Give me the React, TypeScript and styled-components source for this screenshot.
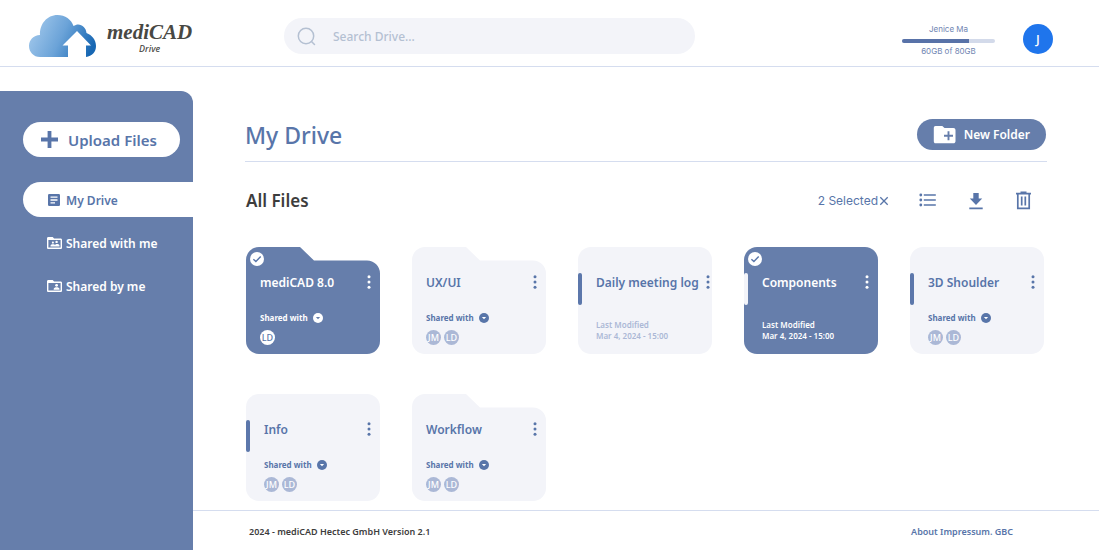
import React from 'react';
import styled, { createGlobalStyle, css } from 'styled-components';

const color = {
  blue: '#667eab',
  text: '#5875a9',
  card: '#f3f4f9',
  soft: '#abb8d6',
  line: '#d5ddef',
  dark: '#3d3d3d',
};

const GlobalStyle = createGlobalStyle`
  *, *::before, *::after { box-sizing: border-box; }
  body { margin: 0; background: #fff; font-family: 'Noto Sans', sans-serif; color: ${color.text}; }
  button, input { font: inherit; color: inherit; }
  button { border: 0; padding: 0; background: none; cursor: pointer; }
  a { color: inherit; text-decoration: none; }
  h1, h2, h3, p, ul { margin: 0; padding: 0; }
  ul { list-style: none; }
  svg { display: block; flex: none; }
`;

const Page = styled.div`
  display: flex;
  flex-direction: column;
  min-height: 100vh;
`;

const Header = styled.header`
  display: flex;
  align-items: flex-start;
  height: 67px;
  padding: 0 46px 0 28px;
  border-bottom: 1px solid ${color.line};
`;

const Brand = styled.a`
  display: flex;
  flex: none;
  gap: 10px;
  width: 256px;
  padding-top: 14px;
  color: #484843;
`;

const BrandText = styled.span`
  display: flex;
  flex-direction: column;
  align-items: center;
  padding-top: 6px;
`;

const BrandName = styled.span`
  font: italic 700 21px/24px 'Liberation Serif', serif;
`;

const BrandSub = styled.span`
  font-size: 9px;
  font-style: italic;
  font-weight: 500;
  line-height: 10px;
`;

const Search = styled.label`
  display: flex;
  align-items: center;
  flex: 0 1 411px;
  gap: 17px;
  height: 36px;
  margin-top: 18px;
  padding: 0 13px;
  border-radius: 18px;
  background: ${color.card};
  color: #b4c0d2;
`;

const SearchInput = styled.input`
  flex: 1;
  min-width: 0;
  padding: 0;
  border: 0;
  outline: 0;
  background: none;
  font-size: 12px;
  font-weight: 500;
  &::placeholder { color: #b4c0d2; opacity: 1; }
`;

const Account = styled.div`
  display: flex;
  gap: 28px;
  margin-left: auto;
  padding-top: 24px;
`;

const Quota = styled.div`
  width: 93px;
  font: 400 8px/11px Inter, sans-serif;
  text-align: center;
  color: #7085b2;
`;

const QuotaBar = styled.progress`
  display: block;
  width: 100%;
  height: 4px;
  margin: 4px 0 3px;
  appearance: none;
  border: 0;
  &::-webkit-progress-bar { border-radius: 2px; background: #d3daea; overflow: hidden; }
  &::-webkit-progress-value { background: #5872a8; }
`;

const Avatar = styled.button`
  width: 30px;
  height: 30px;
  border-radius: 50%;
  background: #1f75ec;
  color: #fff;
  font-size: 13px;
  font-weight: 500;
  line-height: 30px;
`;

const Body = styled.div`
  display: flex;
  flex: 1;
`;

const Sidebar = styled.aside`
  flex: none;
  width: 193px;
  margin-top: 24px;
  padding: 31px 0 0 23px;
  border-radius: 0 12px 0 0;
  background: ${color.blue};
`;

const Upload = styled.button`
  display: flex;
  align-items: center;
  gap: 10px;
  width: 157px;
  height: 35px;
  margin-bottom: 25px;
  padding-left: 18px;
  border-radius: 18px;
  background: #fff;
  font-size: 15px;
  font-weight: 600;
`;

const NavList = styled.ul`
  display: grid;
  gap: 8px;
`;

const NavLink = styled.a<{ $active?: boolean }>`
  display: flex;
  align-items: center;
  gap: 4px;
  height: 35px;
  padding: 1px 0 0 24px;
  border-radius: 18px 0 0 18px;
  font-size: 12px;
  font-weight: 600;
  color: ${p => (p.$active ? color.text : '#fff')};
  background: ${p => (p.$active ? '#fff' : 'none')};
`;

const Column = styled.div`
  display: flex;
  flex: 1;
  flex-direction: column;
  min-width: 0;
`;

const Main = styled.main`
  flex: 1;
  padding: 52px 52px 9px;
`;

const TitleBar = styled.div`
  display: flex;
  align-items: flex-start;
  justify-content: space-between;
  height: 43px;
  padding-right: 1px;
  border-bottom: 1px solid ${color.line};
`;

const Title = styled.h1`
  font-size: 23px;
  font-weight: 500;
  line-height: 32px;
`;

const NewFolder = styled.button`
  display: flex;
  align-items: center;
  gap: 8px;
  height: 31px;
  padding: 0 16px;
  border-radius: 16px;
  background: ${color.blue};
  color: #fff;
  font-size: 12px;
  font-weight: 600;
`;

const Toolbar = styled.div`
  display: flex;
  align-items: center;
  justify-content: space-between;
  height: 30px;
  margin: 24px 0 31px;
  padding: 0 15px 0 1px;
`;

const Subtitle = styled.h2`
  font-size: 17px;
  font-weight: 600;
  line-height: 32px;
  color: ${color.dark};
`;

const Actions = styled.div`
  display: flex;
  align-items: center;
  gap: 30px;
`;

const Selected = styled.button`
  display: flex;
  align-items: center;
  gap: 1px;
  font: 400 12px/16px Inter, sans-serif;
`;

const Grid = styled.ul`
  display: grid;
  grid-template-columns: repeat(auto-fill, 134px);
  gap: 40px 32px;
  padding-left: 1px;
`;

const Card = styled.li<{ $folder?: boolean; $selected?: boolean }>`
  position: relative;
  height: 107px;
  padding: 25px 9px 0 ${p => (p.$folder ? 14 : 18)}px;
  color: ${p => (p.$selected ? '#fff' : color.text)};
  ${p =>
    !p.$folder &&
    css`
      border-radius: 13px;
      background: ${p.$selected ? color.blue : color.card};
      &::before {
        content: '';
        position: absolute;
        top: 26px;
        left: 0;
        width: 4px;
        height: 32px;
        border-radius: 2px;
        background: ${p.$selected ? color.card : '#5c77ab'};
      }
    `}
`;

const FolderShape = styled.svg`
  position: absolute;
  inset: 0;
  z-index: -1;
`;

const Check = styled.label`
  position: absolute;
  top: 5px;
  left: 4px;
  input { position: absolute; inset: 0; margin: 0; opacity: 0; }
`;

const CardHead = styled.div`
  display: flex;
  align-items: center;
  justify-content: space-between;
  gap: 7px;
  height: 20px;
`;

const CardTitle = styled.h3`
  flex: none;
  font-size: 12px;
  font-weight: 600;
  white-space: nowrap;
`;

const SharedButton = styled.button`
  display: flex;
  align-items: center;
  gap: 5px;
  height: 12px;
  margin-top: 20px;
  font-size: 8px;
  font-weight: 700;
  line-height: 12px;
`;

const People = styled.div`
  display: flex;
  gap: 3px;
  margin-top: 6px;
`;

const Person = styled.span<{ $selected?: boolean }>`
  width: 15px;
  height: 15px;
  border-radius: 50%;
  background: ${p => (p.$selected ? '#fff' : color.soft)};
  color: ${p => (p.$selected ? color.text : '#fff')};
  font-size: 9px;
  font-weight: 500;
  line-height: 16px;
  text-align: center;
`;

const Modified = styled.p<{ $selected?: boolean }>`
  margin-top: 27px;
  font-size: 8px;
  font-weight: 600;
  line-height: 11px;
  color: ${p => (p.$selected ? '#fff' : color.soft)};
`;

const Footer = styled.footer`
  display: flex;
  justify-content: space-between;
  height: 40px;
  padding: 0 86px 0 56px;
  border-top: 1px solid ${color.line};
  font-size: 9px;
  font-weight: 600;
  line-height: 41px;
  color: ${color.dark};
`;

const FooterLinks = styled.nav`
  color: ${color.text};
`;

const CloudLogo = () => (
  <svg width="69" height="44" viewBox="0 0 69 44" aria-hidden="true">
    <defs>
      <linearGradient id="cloud" x1="0" y1="0.3" x2="1" y2="0.6">
        <stop offset="0" stopColor="#a3c9ec" />
        <stop offset="0.5" stopColor="#6ba3d8" />
        <stop offset="1" stopColor="#1767b3" />
      </linearGradient>
    </defs>
    <path
      fill="url(#cloud)"
      d="M12 43C5.500 43 1 38 1 32C1 26 5.500 21.300 12 21C11.500 10 19 1 29.500 1C37 1 43.500 5.500 45.500 12C51 8 58 12 58.500 19C64 21 68 26 68 32C68 38 64 42.300 58 43V31.500H63L49 17L34.500 31.500H40V43Z"
    />
  </svg>
);

const SearchIcon = () => (
  <svg width="19" height="19" viewBox="0 0 19 19" fill="none" stroke="currentColor" strokeWidth="1.500" strokeLinecap="round">
    <circle cx="9" cy="9" r="7.700" />
    <path d="M14.500 14.500L17.500 17.500" />
  </svg>
);

const PlusIcon = () => (
  <svg width="17" height="17" viewBox="0 0 17 17" fill="currentColor">
    <path d="M6.600 0h3.800v6.600H17v3.800h-6.600V17H6.600v-6.600H0V6.600h6.600z" />
  </svg>
);

const ArticleIcon = () => (
  <svg width="15" height="14" viewBox="0 0 15 14">
    <rect x="1" y="1" width="12" height="12" rx="1.200" fill="currentColor" />
    <path d="M3.500 4.200h7M3.500 7h7M3.500 9.800h4.500" stroke="#fff" strokeWidth="1.300" />
  </svg>
);

const FolderOutline = ({ children }: { children: React.ReactNode }) => (
  <svg width="15" height="14" viewBox="0 0 15 14" fill="currentColor">
    <path fillRule="evenodd" d="M1.400 1h4.300l1.400 1.500h6.500c.8 0 1.400.6 1.400 1.300v7.900c0 .7-.6 1.300-1.400 1.300H1.400C.6 13 0 12.400 0 11.700V2.300C0 1.600.6 1 1.400 1zM1.400 3.900v7.700h12.200V3.900z" />
    {children}
  </svg>
);

const SharedWithIcon = () => (
  <FolderOutline>
    <circle cx="5.900" cy="6.600" r="1.050" />
    <circle cx="9.600" cy="5.900" r="1.200" />
    <path d="M3.500 10.600V9.700c0-1.600 4-1.900 4.600-.7.500-1.600 4.400-1.400 4.400.5v1.100z" />
  </FolderOutline>
);

const SharedByIcon = () => (
  <FolderOutline>
    <circle cx="9.600" cy="6.300" r="1.400" />
    <path d="M6.700 10.700V10c0-2.200 5.800-2.200 5.800 0v.7z" />
  </FolderOutline>
);

const NewFolderIcon = () => (
  <svg width="23" height="19" viewBox="0 0 23 19">
    <path fill="#fff" d="M2.500 1h6.800l2.200 2.100h8.900c1.200 0 2.100.9 2.100 2.100v11c0 1.200-.9 2.100-2.100 2.100H2.600C1.400 18.300.8 17.400.8 16.200V3C.8 1.800 1.400 1 2.500 1z" />
    <path d="M15.500 6.200v9M11 10.700h9" stroke={color.blue} strokeWidth="1.900" />
  </svg>
);

const CloseIcon = () => (
  <svg width="10" height="10" viewBox="0 0 10 10" stroke="currentColor" strokeWidth="1.300">
    <path d="M1.300 1.300l7.400 7.400M8.700 1.300L1.300 8.700" />
  </svg>
);

const ListIcon = () => (
  <svg width="18" height="16" viewBox="0 0 18 16" fill="currentColor">
    <circle cx="1.800" cy="2" r="1.400" />
    <circle cx="1.800" cy="7" r="1.400" />
    <circle cx="1.800" cy="12" r="1.400" />
    <path d="M4.800 1.200h12v1.600h-12zM4.800 6.200h12v1.600h-12zM4.800 11.200h12v1.600h-12z" />
  </svg>
);

const DownloadIcon = () => (
  <svg width="18" height="18" viewBox="0 0 18 18" fill="currentColor">
    <path d="M6.300 1h5.400v5.500h3.500L9 13 2.800 6.500h3.500zM2.300 15.500h13.400v1.800H2.300z" />
  </svg>
);

const TrashIcon = () => (
  <svg width="17" height="20" viewBox="0 0 17 20" fill="none" stroke="currentColor" strokeWidth="1.700">
    <path d="M1 2.700h15M5.500 1.300h6M2.800 3v14.300h11.400V3M6.700 5.500v9M10.300 5.500v9" />
  </svg>
);

const DotsIcon = () => (
  <svg width="4" height="14" viewBox="0 0 4 14" fill="currentColor">
    <circle cx="2" cy="1.700" r="1.500" />
    <circle cx="2" cy="7" r="1.500" />
    <circle cx="2" cy="12.300" r="1.500" />
  </svg>
);

const ArrowIcon = ({ arrow }: { arrow: string }) => (
  <svg width="10" height="10" viewBox="0 0 10 10">
    <circle cx="5" cy="5" r="5" fill="currentColor" />
    <path d="M2.900 4h4.200L5 6.200z" fill={arrow} />
  </svg>
);

type Item = {
  name: string;
  folder?: boolean;
  selected?: boolean;
  people?: string[];
  modified?: string;
};

const items: Item[] = [
  { name: 'mediCAD 8.0', folder: true, selected: true, people: ['LD'] },
  { name: 'UX/UI', folder: true, people: ['JM', 'LD'] },
  { name: 'Daily meeting log', modified: 'Mar 4, 2024 - 15:00' },
  { name: 'Components', selected: true, modified: 'Mar 4, 2024 - 15:00' },
  { name: '3D Shoulder', people: ['JM', 'LD'] },
  { name: 'Info', people: ['JM', 'LD'] },
  { name: 'Workflow', folder: true, people: ['JM', 'LD'] },
];

const FileCard = ({ item }: { item: Item }) => {
  const { name, folder, selected, people, modified } = item;
  const fill = selected ? color.blue : color.card;
  return (
    <Card $folder={folder} $selected={selected}>
      {folder && (
        <FolderShape width="134" height="107" viewBox="0 0 134 107" aria-hidden="true">
          <path fill={fill} d="M13 0H54L68 13.500H121A13 13 0 0 1 134 26.500V94A13 13 0 0 1 121 107H13A13 13 0 0 1 0 94V13A13 13 0 0 1 13 0Z" />
        </FolderShape>
      )}
      {selected && (
        <Check>
          <input type="checkbox" defaultChecked aria-label={`Select ${name}`} />
          <svg width="14" height="14" viewBox="0 0 14 14">
            <circle cx="7" cy="7" r="7" fill="#fff" />
            <path d="M3.400 7.200l2.500 2.400 4.800-5" fill="none" stroke={color.text} strokeWidth="1.400" />
          </svg>
        </Check>
      )}
      <CardHead>
        <CardTitle>{name}</CardTitle>
        <button aria-label={`Options for ${name}`}><DotsIcon /></button>
      </CardHead>
      {people && (
        <>
          <SharedButton>Shared with <ArrowIcon arrow={selected ? color.blue : '#fff'} /></SharedButton>
          <People>
            {people.map(p => <Person key={p} $selected={selected}>{p}</Person>)}
          </People>
        </>
      )}
      {modified && <Modified $selected={selected}>Last Modified<br />{modified}</Modified>}
    </Card>
  );
};

export default function App() {
  return (
    <Page>
      <GlobalStyle />
      <Header>
        <Brand href="#">
          <CloudLogo />
          <BrandText>
            <BrandName>mediCAD</BrandName>
            <BrandSub>Drive</BrandSub>
          </BrandText>
        </Brand>
        <Search>
          <SearchIcon />
          <SearchInput type="text" placeholder="Search Drive..." aria-label="Search Drive" />
        </Search>
        <Account>
          <Quota>
            <p>Jenice Ma</p>
            <QuotaBar value={58} max={80} aria-label="Storage used" />
            <p>60GB of 80GB</p>
          </Quota>
          <Avatar>J</Avatar>
        </Account>
      </Header>
      <Body>
        <Sidebar>
          <Upload><PlusIcon />Upload Files</Upload>
          <nav>
            <NavList>
              <li><NavLink href="#" $active><ArticleIcon />My Drive</NavLink></li>
              <li><NavLink href="#"><SharedWithIcon />Shared with me</NavLink></li>
              <li><NavLink href="#"><SharedByIcon />Shared by me</NavLink></li>
            </NavList>
          </nav>
        </Sidebar>
        <Column>
          <Main>
            <TitleBar>
              <Title>My Drive</Title>
              <NewFolder><NewFolderIcon />New Folder</NewFolder>
            </TitleBar>
            <Toolbar>
              <Subtitle>All Files</Subtitle>
              <Actions>
                <Selected>2 Selected <CloseIcon /></Selected>
                <button aria-label="List view"><ListIcon /></button>
                <button aria-label="Download"><DownloadIcon /></button>
                <button aria-label="Delete"><TrashIcon /></button>
              </Actions>
            </Toolbar>
            <Grid>
              {items.map(item => <FileCard key={item.name} item={item} />)}
            </Grid>
          </Main>
          <Footer>
            <p>2024 - mediCAD Hectec GmbH Version 2.1</p>
            <FooterLinks><a href="#">About</a> <a href="#">Impressum.</a> <a href="#">GBC</a></FooterLinks>
          </Footer>
        </Column>
      </Body>
    </Page>
  );
}
